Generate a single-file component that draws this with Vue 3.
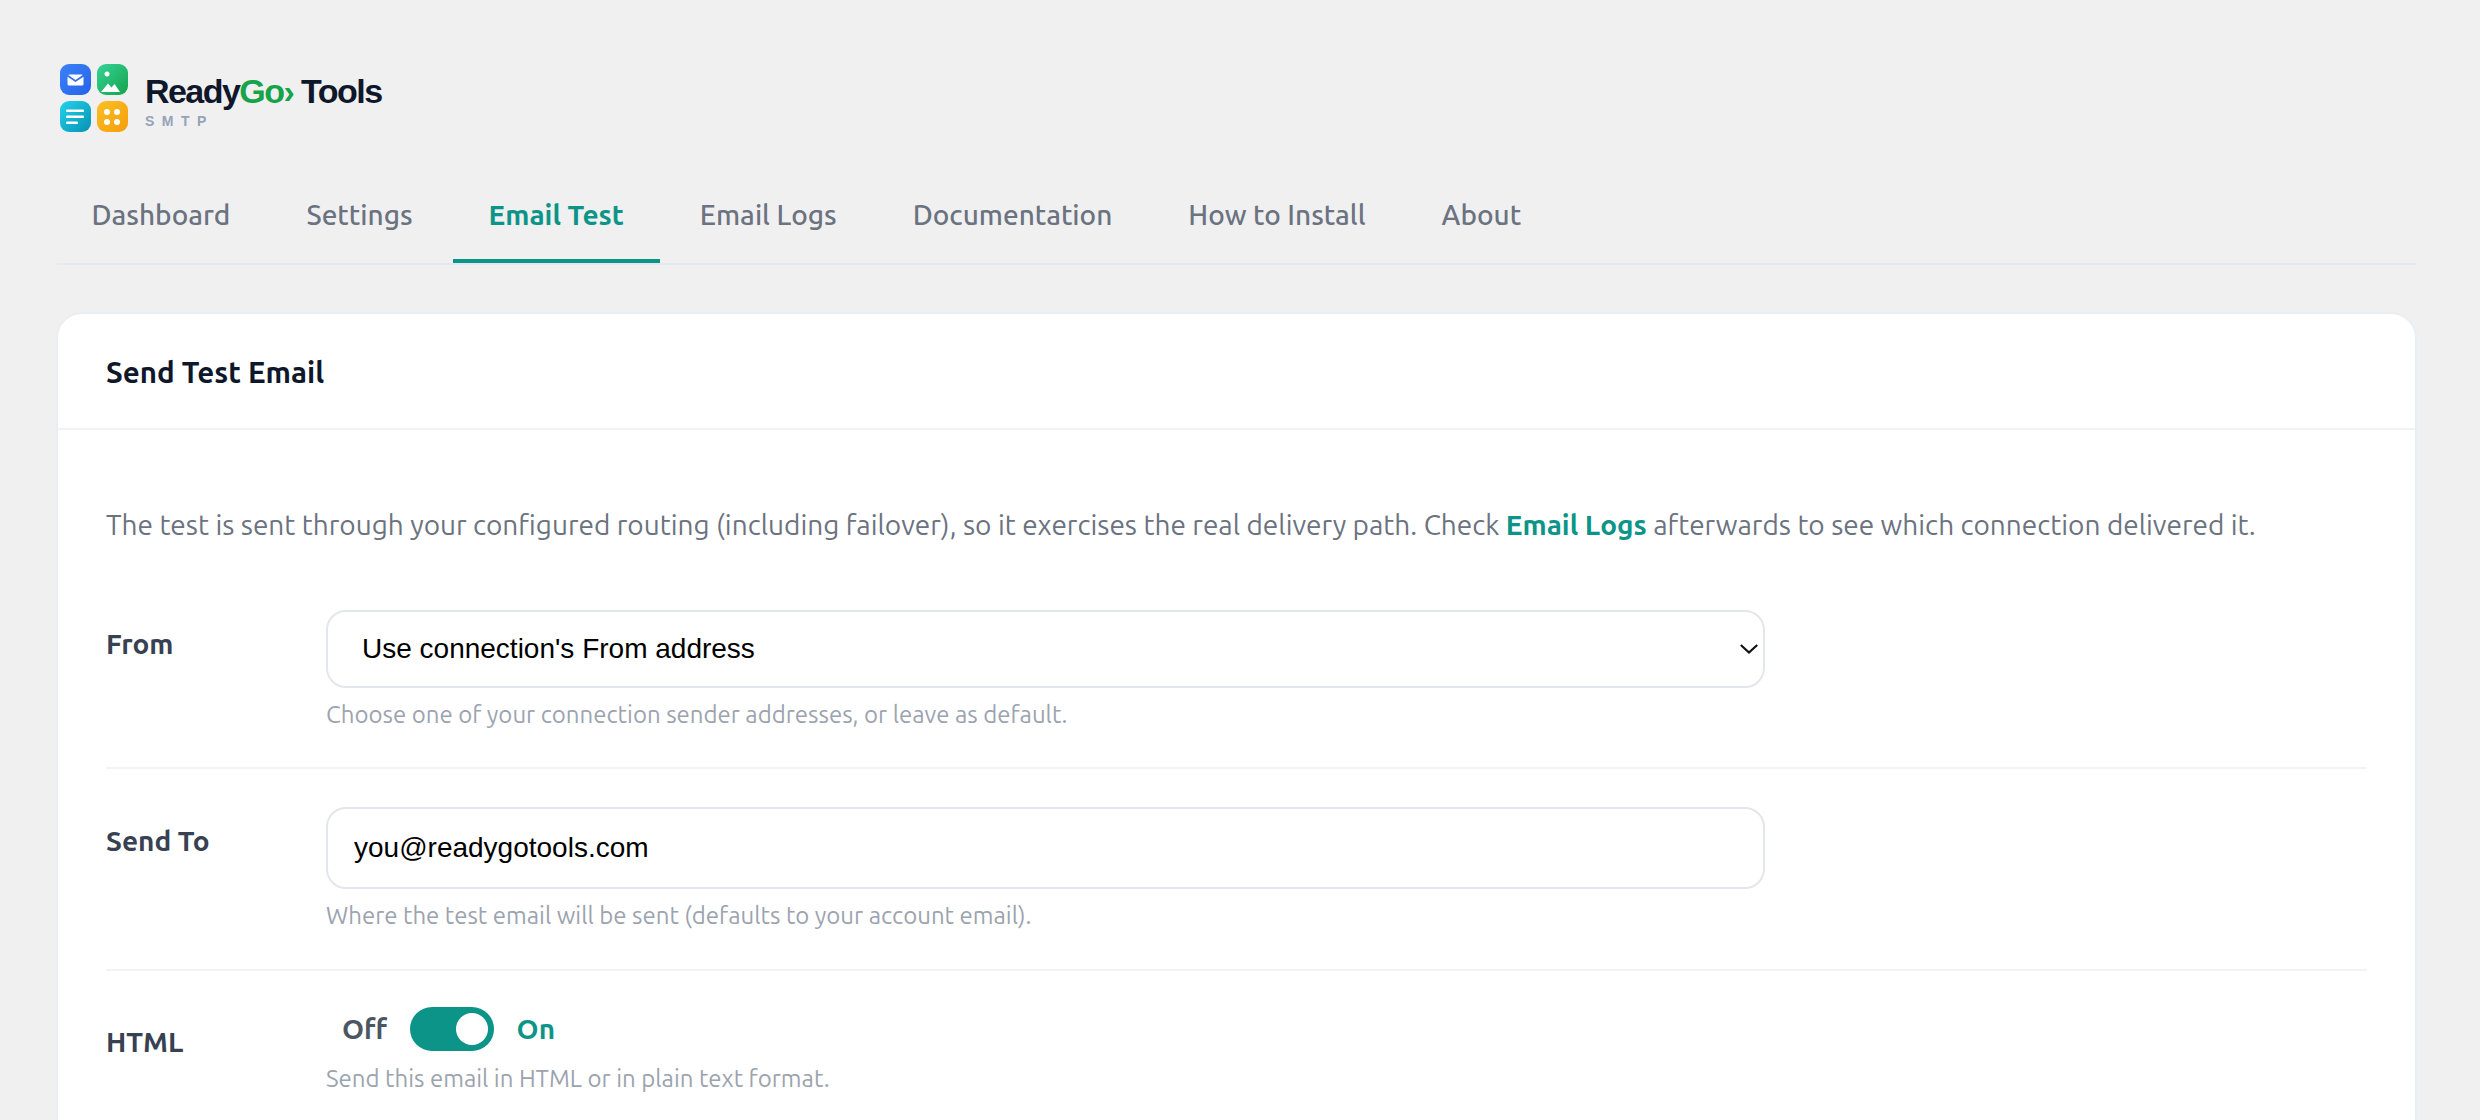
<template>
  <div class="page">
    <div class="brand">
      <svg class="brand-icon" viewBox="0 0 68 68" width="68" height="68">
        <defs>
          <linearGradient id="gBlue" x1="0" y1="0" x2="1" y2="1"><stop offset="0" stop-color="#3b82f6" /><stop offset="1" stop-color="#2563eb" /></linearGradient>
          <linearGradient id="gGreen" x1="0" y1="0" x2="1" y2="1"><stop offset="0" stop-color="#34d399" /><stop offset="1" stop-color="#16a34a" /></linearGradient>
          <linearGradient id="gCyan" x1="0" y1="0" x2="1" y2="1"><stop offset="0" stop-color="#22d3ee" /><stop offset="1" stop-color="#0891b2" /></linearGradient>
          <linearGradient id="gAmber" x1="0" y1="0" x2="1" y2="1"><stop offset="0" stop-color="#fbbf24" /><stop offset="1" stop-color="#f59e0b" /></linearGradient>
        </defs>
        <rect x="0" y="0" width="31" height="31" rx="9" fill="url(#gBlue)" />
        <rect x="37" y="0" width="31" height="31" rx="9" fill="url(#gGreen)" />
        <rect x="0" y="37" width="31" height="31" rx="9" fill="url(#gCyan)" />
        <rect x="37" y="37" width="31" height="31" rx="9" fill="url(#gAmber)" />
        <!-- mail -->
        <path d="M9.500 10.500h12a1.500 1.500 0 0 1 1.200.6L15.500 16 8.300 11.100a1.500 1.500 0 0 1 1.200-.6z" fill="#fff" />
        <path d="M7.500 12.700l8 5.300 8-5.300v7.300a1.500 1.500 0 0 1-1.500 1.500H9a1.500 1.500 0 0 1-1.500-1.500z" fill="#fff" />
        <!-- picture -->
        <circle cx="47" cy="10" r="2.500" fill="#fff" />
        <path d="M41 28l7-8.500 3.500 4 3-3.500 5.500 8z" fill="#fff" />
        <!-- lines -->
        <rect x="6" y="45.500" width="18" height="2.400" rx="1" fill="#fff" />
        <rect x="6" y="51.500" width="18" height="2.400" rx="1" fill="#fff" />
        <rect x="6" y="57.500" width="12" height="2.400" rx="1" fill="#fff" />
        <!-- dots -->
        <circle cx="47" cy="48" r="3" fill="#fff" />
        <circle cx="57" cy="48" r="3" fill="#fff" />
        <circle cx="47" cy="58" r="3" fill="#fff" />
        <circle cx="57" cy="58" r="3" fill="#fff" />
      </svg>
      <div class="brand-text">
        <div class="brand-name">Ready<span class="brand-go">Go›</span> Tools</div>
        <div class="brand-sub">SMTP</div>
      </div>
    </div>

    <nav class="tabs">
      <a
        v-for="tab in tabs"
        :key="tab"
        class="tab"
        :class="{ active: tab === activeTab }"
        @click="activeTab = tab"
      >{{ tab }}</a>
    </nav>

    <section class="card">
      <h2 class="card-title">Send Test Email</h2>
      <div class="card-body">
        <p class="intro">
          The test is sent through your configured routing (including failover), so it exercises the real delivery path. Check
          <a class="intro-link">Email Logs</a>
          afterwards to see which connection delivered it.
        </p>

        <div class="row row-from">
          <label class="row-label">From</label>
          <div class="row-control">
            <div class="select-wrap">
              <select class="field field-select">
                <option>Use connection's From address</option>
              </select>
              <svg class="chevron" viewBox="0 0 18 10" width="18" height="10">
                <path d="M.8 1L9 8.500 17.200 1" fill="none" stroke="#111" stroke-width="2.200" />
              </svg>
            </div>
            <p class="hint">Choose one of your connection sender addresses, or leave as default.</p>
          </div>
        </div>

        <div class="row row-to">
          <label class="row-label">Send To</label>
          <div class="row-control">
            <input v-model="sendTo" class="field field-input" type="text" />
            <p class="hint">Where the test email will be sent (defaults to your account email).</p>
          </div>
        </div>

        <div class="row row-html">
          <label class="row-label">HTML</label>
          <div class="row-control">
            <div class="switch-line">
              <span class="switch-off">Off</span>
              <button class="switch" type="button" @click="html = !html">
                <span class="knob"></span>
              </button>
              <span class="switch-on">On</span>
            </div>
            <p class="hint hint-html">Send this email in HTML or in plain text format.</p>
          </div>
        </div>
      </div>
    </section>
  </div>
</template>

<script setup>
import { ref } from 'vue'

const tabs = ['Dashboard', 'Settings', 'Email Test', 'Email Logs', 'Documentation', 'How to Install', 'About']
const activeTab = ref('Email Test')
const sendTo = ref('you@readygotools.com')
const html = ref(true)
</script>

<style scoped>
.page {
  padding: 64px 63px 0 57px;
  font-family: Ubuntu, "Noto Sans", sans-serif;
}

.brand {
  display: flex;
  align-items: center;
  gap: 17px;
  padding-left: 3px;
  height: 68px;
}

.brand-text {
  padding-top: 4.500px;
}

.brand-name {
  font-family: "Liberation Sans", sans-serif;
  font-size: 34px;
  font-weight: 700;
  line-height: 38px;
  letter-spacing: -1.55px;
  color: #0f172a;
}

.brand-go {
  color: #16a34a;
}

.brand-sub {
  font-family: "Liberation Sans", sans-serif;
  font-size: 14px;
  font-weight: 700;
  line-height: 16px;
  margin-top: 2.500px;
  letter-spacing: 7.500px;
  color: #94a3b8;
}

.tabs {
  display: flex;
  gap: 4px;
  margin-top: 41px;
  border-bottom: 2px solid #e5e9ee;
}

.tab {
  padding: 0 36px;
  height: 90px;
  line-height: 84px;
  font-size: 28px;
  font-weight: 500;
  color: #6b7280;
  cursor: pointer;
  box-sizing: border-box;
  border-bottom: 4px solid transparent;
}

.tab:first-child {
  margin-left: -1.500px;
}

.tab.active {
  color: #0d9488;
  font-weight: 700;
  border-bottom-color: #0d9488;
}

.card {
  margin: 47px 0 0 -1px;
  min-height: 900px;
  background: #fff;
  border: 2px solid #e9eef3;
  border-radius: 26px;
}

.card-title {
  margin: 0;
  padding: 0 48px;
  height: 114px;
  line-height: 118px;
  font-size: 29.500px;
  font-weight: 700;
  color: #0f172a;
  border-bottom: 2px solid #f1f3f5;
}

.card-body {
  padding: 0 48.500px 0 48px;
}

.intro {
  margin: 0;
  padding-top: 75px;
  font-size: 28px;
  line-height: 40px;
  font-weight: 400;
  color: #6b7280;
}

.intro-link {
  color: #0d9488;
  font-weight: 700;
}

.row {
  display: grid;
  grid-template-columns: 220px 1439px;
  border-bottom: 2px solid #f1f3f5;
}

.row-from {
  margin-top: 64.500px;
  padding-bottom: 38.500px;
}

.row-to {
  padding-top: 37.500px;
  padding-bottom: 39px;
}

.row-html {
  padding-top: 36px;
  border-bottom: none;
}

.row-label {
  font-size: 28px;
  font-weight: 700;
  color: #374151;
  padding-top: 18.500px;
}

.row-html .row-label {
  padding-top: 19px;
}

.select-wrap {
  position: relative;
}

.chevron {
  position: absolute;
  right: 7px;
  top: 34px;
}

.field {
  display: block;
  width: 100%;
  box-sizing: border-box;
  background: #fff;
  border: 2px solid #e3e7ec;
  border-radius: 20px;
  font-family: "Liberation Sans", sans-serif;
  font-size: 28px;
  color: #000;
}

.field-select {
  appearance: none;
  height: 78px;
  padding: 0 34px;
}

.field-input {
  height: 82px;
  padding: 0 26px;
  outline: none;
}

.hint {
  margin: 13px 0 0;
  font-size: 24px;
  line-height: 28px;
  font-weight: 400;
  color: #9ca3af;
}

.hint-html {
  margin-top: 14px;
}

.switch-line {
  display: flex;
  align-items: center;
  height: 44px;
}

.switch-off {
  margin: 0 22.500px 0 16px;
  font-size: 28px;
  font-weight: 700;
  color: #4b5563;
}

.switch {
  width: 84px;
  height: 44px;
  padding: 6px;
  border: none;
  border-radius: 22px;
  background: #0d9488;
  display: flex;
  justify-content: flex-end;
  cursor: pointer;
}

.knob {
  width: 32px;
  height: 32px;
  border-radius: 50%;
  background: #fff;
}

.switch-on {
  margin-left: 23px;
  font-size: 28px;
  font-weight: 700;
  color: #0d9488;
}
</style>

<style>
body {
  background: #f0f0f1;
  overflow: hidden;
  height: 1120px;
}
</style>
